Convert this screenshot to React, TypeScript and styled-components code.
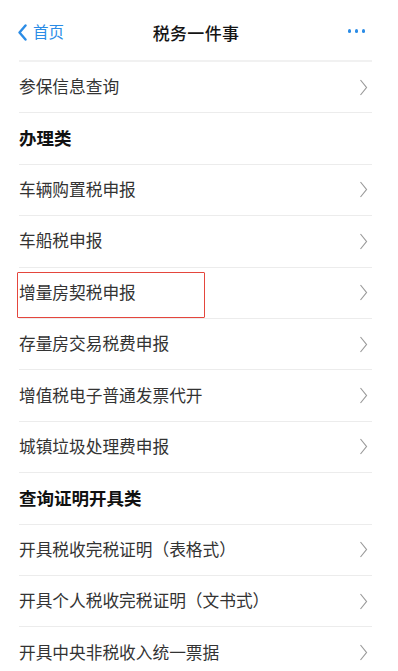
import React, { FC } from "react";
import styled, { createGlobalStyle } from "styled-components";

const GlobalStyle = createGlobalStyle`
  html, body {
    margin: 0;
    padding: 0;
    background: #ffffff;
  }
  body {
    font-family: "Noto Sans CJK SC", "Noto Sans", sans-serif;
    -webkit-font-smoothing: antialiased;
  }
`;

const Page = styled.div`
  width: 398px;
  min-height: 671px;
  background: #fff;
  overflow: hidden;
`;

const NavBar = styled.div`
  height: 60px;
  display: grid;
  grid-template-columns: 1fr auto 1fr;
  align-items: center;
  padding: 4px 24px 0 18px;
  box-sizing: border-box;
`;

const BackLink = styled.div`
  display: flex;
  align-items: center;
  gap: 6px;
  color: #2b8ce6;
  font-size: 15.5px;
  line-height: 1;
`;

const Title = styled.div`
  font-size: 17px;
  font-weight: 500;
  color: #141414;
  letter-spacing: 0.3px;
`;

const MoreDots = styled.div`
  justify-self: end;
  display: flex;
  gap: 3.5px;
  margin-right: 9px;
  margin-top: -2px;
`;

const Dot = styled.span`
  width: 3.5px;
  height: 3.5px;
  border-radius: 50%;
  background: #2b8ce6;
`;

const List = styled.div`
  margin: 0 26px 0 19px;
  border-top: 2px solid #f1f1f1;
`;

type RowProps = {
  $section?: boolean;
};

const Row = styled.div<RowProps>`
  position: relative;
  height: 51.4px;
  box-sizing: border-box;
  display: flex;
  align-items: center;
  justify-content: space-between;
  padding: 0 4px 0 0;
  border-bottom: 1px solid #ececec;
  font-size: ${p => (p.$section ? "17.5px" : "16.7px")};
  font-weight: ${p => (p.$section ? 700 : 400)};
  color: ${p => (p.$section ? "#111" : "#333")};
  &:last-child {
    border-bottom: none;
  }
`;

const Label = styled.span`
  white-space: nowrap;
  margin-top: -2px;
`;

const Highlight = styled.div`
  position: absolute;
  left: -2px;
  top: 4px;
  width: 188px;
  height: 46px;
  box-sizing: border-box;
  border: 1.5px solid #e4463d;
  border-radius: 1px;
  pointer-events: none;
`;

const BackIcon = () => (
  <svg width="9" height="17" viewBox="0 0 9 17">
    <polyline points="7.5,1.5 1.5,8.5 7.5,15.5" fill="none" stroke="#2b8ce6" strokeWidth="2.4" strokeLinecap="round" strokeLinejoin="round" />
  </svg>
);

const Chevron = () => (
  <svg width="9" height="17" viewBox="0 0 9 17">
    <polyline points="1.5,1 7.5,8.5 1.5,16" fill="none" stroke="#9b9b9b" strokeWidth="1.2" />
  </svg>
);

type Item = { label: string; section?: boolean; marked?: boolean };

const items: Item[] = [
  { label: "参保信息查询" },
  { label: "办理类", section: true },
  { label: "车辆购置税申报" },
  { label: "车船税申报" },
  { label: "增量房契税申报", marked: true },
  { label: "存量房交易税费申报" },
  { label: "增值税电子普通发票代开" },
  { label: "城镇垃圾处理费申报" },
  { label: "查询证明开具类", section: true },
  { label: "开具税收完税证明（表格式）" },
  { label: "开具个人税收完税证明（文书式）" },
  { label: "开具中央非税收入统一票据" },
];

const ListRow: FC<{ item: Item }> = ({ item }) => (
  <Row $section={item.section}>
    <Label>{item.label}</Label>
    {!item.section && <Chevron />}
    {item.marked && <Highlight />}
  </Row>
);

const App = () => (
  <Page>
    <GlobalStyle />
    <NavBar>
      <BackLink>
        <BackIcon />
        <span>首页</span>
      </BackLink>
      <Title>税务一件事</Title>
      <MoreDots>
        <Dot />
        <Dot />
        <Dot />
      </MoreDots>
    </NavBar>
    <List>
      {items.map(item => (
        <ListRow key={item.label} item={item} />
      ))}
    </List>
  </Page>
);

export default App;
